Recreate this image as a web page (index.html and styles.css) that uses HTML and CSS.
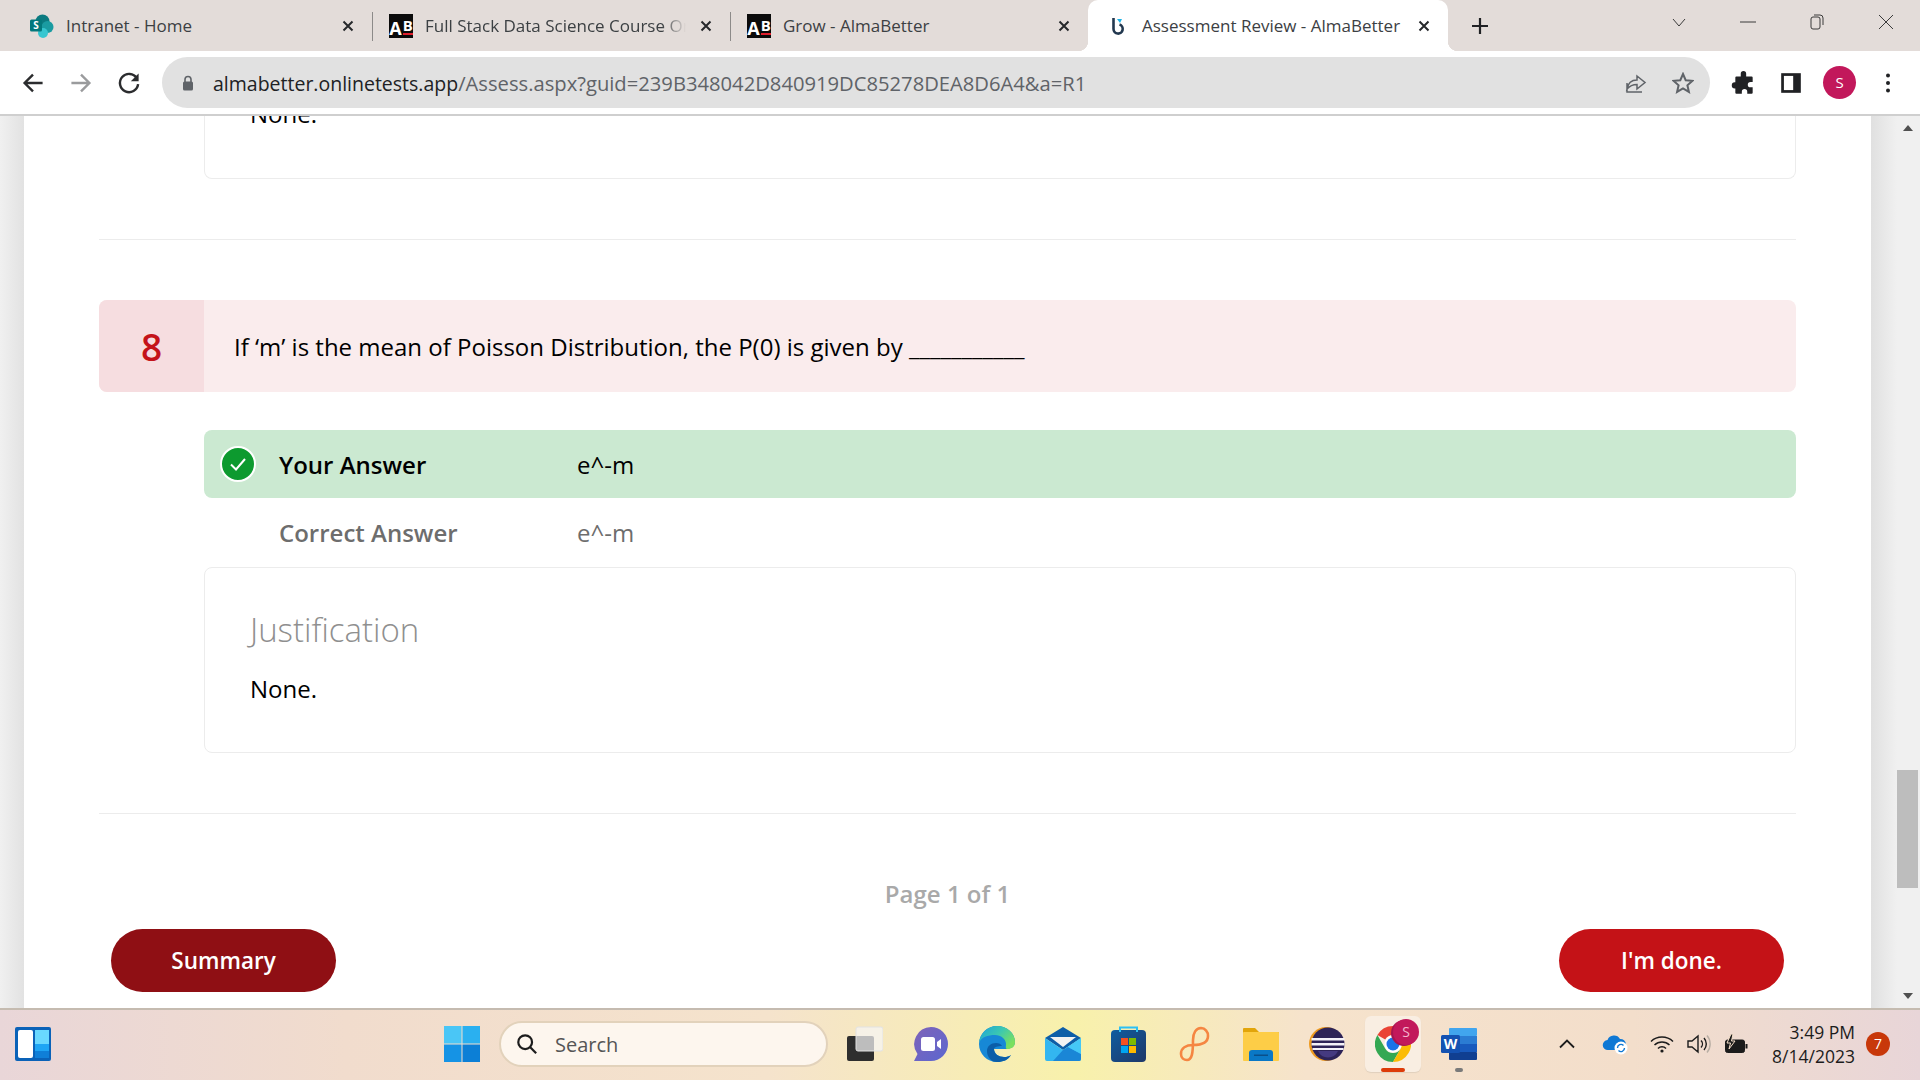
FILE: index.html
```html
<!DOCTYPE html>
<html lang="en">
<head>
  <meta charset="UTF-8" />
  <title>Assessment Review - AlmaBetter</title>
  <link rel="stylesheet" href="styles.css">
</head>
<body>

  <header class="tabstrip">
    <div class="tab tab-first">
      <svg class="favicon" viewBox="0 0 24 24"><circle cx="12.500" cy="7.500" r="7" fill="#0b7a80"/><circle cx="17.500" cy="13" r="6" fill="#1a9ba1"/><circle cx="13" cy="19" r="5" fill="#37c6d0"/><rect x="0" y="5.500" width="12" height="12" rx="1.500" fill="#03787c"/><text x="6" y="15" class="favicon-s">S</text></svg>
      <span class="tab-title">Intranet - Home</span>
      <svg class="tab-close" viewBox="0 0 12 12"><path d="M1.500 1.500l9 9M10.500 1.500l-9 9"/></svg>
    </div>
    <div class="tab tab-sep">
      <span class="ab-logo">A<span class="ab-b">B</span></span>
      <span class="tab-title tab-fade">Full Stack Data Science Course Online</span>
      <svg class="tab-close" viewBox="0 0 12 12"><path d="M1.500 1.500l9 9M10.500 1.500l-9 9"/></svg>
    </div>
    <div class="tab tab-sep">
      <span class="ab-logo">A<span class="ab-b">B</span></span>
      <span class="tab-title">Grow - AlmaBetter</span>
      <svg class="tab-close" viewBox="0 0 12 12"><path d="M1.500 1.500l9 9M10.500 1.500l-9 9"/></svg>
    </div>
    <div class="tab tab-active">
      <svg class="favicon-b" viewBox="0 0 16 20"><path d="M3.500 2v11a4.600 4.600 0 1 0 6-4.400" fill="none" stroke="#22384f" stroke-width="2.600"/><path d="M7 3h5l-2 4z" fill="#1fb2e6"/></svg>
      <span class="tab-title">Assessment Review - AlmaBetter</span>
      <svg class="tab-close" viewBox="0 0 12 12"><path d="M1.500 1.500l9 9M10.500 1.500l-9 9"/></svg>
    </div>
    <svg class="new-tab" viewBox="0 0 18 18"><path d="M9 1v16M1 9h16"/></svg>
    <div class="window-controls">
      <svg viewBox="0 0 16 16"><path d="M2 5l6 7 6-7"/></svg>
      <svg viewBox="0 0 16 16"><path d="M0 8h16"/></svg>
      <svg viewBox="0 0 16 16"><rect x="2" y="3" width="9" height="12" rx="2"/><path d="M5 1h6a3 3 0 0 1 3 3v7"/></svg>
      <svg viewBox="0 0 16 16"><path d="M1 1l14 14M15 1L1 15"/></svg>
    </div>
  </header>

  <nav class="toolbar">
    <svg class="nav-icon" viewBox="0 0 20 20"><path d="M18 10H3M10 3l-7 7 7 7"/></svg>
    <svg class="nav-icon nav-off" viewBox="0 0 20 20"><path d="M2 10h15M10 3l7 7-7 7"/></svg>
    <svg class="nav-icon" viewBox="0 0 20 20"><path d="M16.500 6A7.600 7.600 0 1 0 17.600 11"/><path class="fill" d="M18 2v6.500h-6.500z"/></svg>
    <div class="omnibox">
      <svg class="lock" viewBox="0 0 12 16"><path d="M3 7V4.500a3 3 0 0 1 6 0V7" fill="none" stroke="#5f6368" stroke-width="1.600"/><rect x="1" y="6.500" width="10" height="9" rx="1.500" fill="#5f6368"/></svg>
      <span class="url"><span class="url-host">almabetter.onlinetests.app</span>/Assess.aspx?guid=239B348042D840919DC85278DEA8D6A4&amp;a=R1</span>
      <svg class="omni-icon share" viewBox="0 0 22 22"><path d="M2 11v9h15M2 17c1-6 5-9 10-9V4l8 6.500-8 6.500v-4.500c-4 0-7 1-10 4.500z"/></svg>
      <svg class="omni-icon star" viewBox="0 0 22 22"><path d="M11 2l2.700 6.200 6.800.6-5.100 4.500 1.500 6.600L11 16.400l-5.900 3.500 1.500-6.600L1.500 8.800l6.800-.6z"/></svg>
    </div>
    <svg class="tool puzzle" viewBox="0 0 24 24"><path d="M9 3.500a2.500 2.500 0 0 1 5 0V6h5a1 1 0 0 1 1 1v4h-2a2.500 2.500 0 0 0 0 5h2v5a1 1 0 0 1-1 1h-4v-2a2.500 2.500 0 0 0-5 0v2H5a1 1 0 0 1-1-1v-4h-.5a2.800 2.800 0 0 1 0-5.600H4V7a1 1 0 0 1 1-1h4z"/></svg>
    <svg class="tool panel" viewBox="0 0 22 22"><rect x="2" y="2" width="18" height="18" fill="#202124"/><rect x="4.500" y="4.500" width="8.500" height="13" fill="#fff"/></svg>
    <span class="avatar">S</span>
    <svg class="tool dots" viewBox="0 0 6 22"><circle cx="3" cy="3.500" r="2"/><circle cx="3" cy="11" r="2"/><circle cx="3" cy="18.500" r="2"/></svg>
  </nav>

  <div class="viewport">
    <div class="gutter-left"></div>

    <main class="page">
      <section class="card card-clipped">
        <p class="card-text">None.</p>
      </section>
      <hr class="divider" />

      <section class="question">
        <div class="question-num">8</div>
        <div class="question-text">If ‘m’ is the mean of Poisson Distribution, the P(0) is given by ___________</div>
      </section>

      <div class="answer answer-right">
        <svg class="check" viewBox="0 0 36 36"><circle cx="18" cy="18" r="17" fill="#0d9a2f" stroke="#fff" stroke-width="2"/><path d="M11 18.500l5 5 9-10.500" fill="none" stroke="#fff" stroke-width="2"/></svg>
        <span class="answer-label">Your Answer</span>
        <span class="answer-value">e^-m</span>
      </div>
      <div class="answer answer-key">
        <span class="answer-label">Correct Answer</span>
        <span class="answer-value">e^-m</span>
      </div>

      <section class="card">
        <h2 class="card-title">Justification</h2>
        <p class="card-text">None.</p>
      </section>
      <hr class="divider" />

      <div class="pager">Page 1 of 1</div>
      <div class="actions">
        <button class="btn btn-summary">Summary</button>
        <button class="btn btn-done">I'm done.</button>
      </div>
    </main>

    <aside class="gutter-right">
      <div class="scrollbar">
        <span class="arrow-up"></span>
        <span class="thumb"></span>
        <span class="arrow-down"></span>
      </div>
    </aside>
  </div>

  <footer class="taskbar">
    <svg class="task-icon widgets" viewBox="0 0 36 34"><rect width="36" height="34" rx="2" fill="#0a62b8"/><rect x="3" y="3" width="15" height="28" rx="2" fill="#fff"/><rect x="20" y="3" width="14" height="14" fill="#69d8ff"/><rect x="20" y="17" width="14" height="7" fill="#1ea5f5"/><rect x="20" y="24" width="14" height="7" fill="#0f7fd8"/></svg>

    <svg class="task-icon start" viewBox="0 0 36 36"><rect width="17.500" height="17.500" fill="#4ac6f6"/><rect x="18.500" width="17.500" height="17.500" fill="#2ab0f0"/><rect y="18.500" width="17.500" height="17.500" fill="#1593e5"/><rect x="18.500" y="18.500" width="17.500" height="17.500" fill="#0c7fd6"/></svg>

    <div class="search">
      <svg class="search-icon" viewBox="0 0 24 24"><circle cx="10" cy="10" r="7.500"/><path d="M15.500 15.500L22 22"/></svg>
      <span>Search</span>
    </div>

    <div class="apps">
      <div class="app">
        <svg class="task-icon" viewBox="0 0 36 34"><rect x="0" y="9" width="27" height="25" rx="2" fill="#2e2e2e"/><rect x="9" y="0" width="27" height="24" rx="2" fill="#f5f5f5" fill-opacity=".72" stroke="#e2e2e2"/></svg>
      </div>
      <div class="app">
        <svg class="task-icon" viewBox="0 0 36 36"><defs><linearGradient id="teamsFill" x1="0" y1="0" x2="1" y2="1"><stop offset="0" stop-color="#7f63b8"/><stop offset="1" stop-color="#5b67d0"/></linearGradient></defs><path d="M18 1a17 17 0 0 1 0 34H1l3.500-7A17 17 0 0 1 18 1z" fill="url(#teamsFill)"/><rect x="8" y="11" width="14" height="14" rx="2.500" fill="#fff"/><path d="M24 16l4-3v10l-4-3z" fill="#fff"/></svg>
      </div>
      <div class="app">
        <svg class="task-icon" viewBox="0 0 36 36"><defs><linearGradient id="edgeTop" x1="0" y1="0" x2="1" y2=".6"><stop offset="0" stop-color="#1aa3dc"/><stop offset=".55" stop-color="#3cc8b0"/><stop offset="1" stop-color="#7be05e"/></linearGradient></defs><path d="M18 0c10 0 18 7 18 16 0 5-5 7-9 7H15c0 5 5 8 10 8 3 0 5-.5 7-2-3 5-8 7-14 7C8 36 0 28 0 18S8 0 18 0z" fill="#1788d6"/><path d="M0 17C1 7 9 0 18 0c10 0 18 7 18 16 0 5-4 7-7 7-3 0-2-2-2-5 0-5-5-9-11-9C9 9 2 11 0 17z" fill="url(#edgeTop)"/><path d="M15 23c0 5 5 8 10 8 3 0 5-.5 7-2-3 5-8 7-14 7-6 0-10-5-10-11 0-5 4-8 9-8 3 0 5 1 6 3-4 0-8 1-8 3z" fill="#0b5ea8"/></svg>
      </div>
      <div class="app">
        <svg class="task-icon" viewBox="0 0 36 34"><path d="M0 11L18 0l18 11-18 12z" fill="#0d5ea8"/><path d="M5 10h26l-13 10z" fill="#f2f2f2"/><path d="M0 11l18 12 18-12v21a2 2 0 0 1-2 2H2a2 2 0 0 1-2-2z" fill="#33b6f0"/><path d="M36 27v5a2 2 0 0 1-2 2H8l10-11 5-3z" fill="#1a86d6"/><path d="M36 11v16L23 20z" fill="#45c8f6"/></svg>
      </div>
      <div class="app">
        <svg class="task-icon" viewBox="0 0 36 36"><defs><linearGradient id="storeFill" x1="0" y1="0" x2="1" y2="1"><stop offset="0" stop-color="#0f5da0"/><stop offset="1" stop-color="#1f3868"/></linearGradient></defs><rect y="4" width="35" height="32" rx="4" fill="url(#storeFill)"/><path d="M9 6V1.500h17V6" fill="none" stroke="#2cc0f5" stroke-width="2"/><rect x="10" y="12" width="7" height="7" fill="#f25022"/><rect x="18" y="12" width="7" height="7" fill="#7fba00"/><rect x="10" y="20" width="7" height="7" fill="#00a4ef"/><rect x="18" y="20" width="7" height="7" fill="#ffb900"/></svg>
      </div>
      <div class="app">
        <svg class="task-icon perf" viewBox="0 0 36 36"><path d="M16 14c0-7 3-12 8-12a7.500 7.500 0 0 1 7 8c0 6-6 9-15 9-7 0-12 3-12 9 0 4 3 6 6 6 5 0 6-7 6-20"/></svg>
      </div>
      <div class="app">
        <svg class="task-icon" viewBox="0 0 36 34"><path d="M0 2a1 1 0 0 1 1-1h11l4 4h19a1 1 0 0 1 1 1v5H0z" fill="#e2a50a"/><rect y="5" width="36" height="29" rx="1" fill="#fdcd47"/><path d="M6 34v-8a3 3 0 0 1 3-3h18a3 3 0 0 1 3 3v8z" fill="#0a78c6"/><rect x="11" y="27.500" width="14" height="1.500" fill="#0a4f8a"/></svg>
      </div>
      <div class="app">
        <svg class="task-icon" viewBox="0 0 36 36"><circle cx="17" cy="18" r="17" fill="#ee9a1f"/><circle cx="19" cy="18" r="16.500" fill="#2d2357"/><path d="M9 25h20a11 11 0 0 1-20 0z" fill="#453a80"/><rect x="2.500" y="12" width="33" height="2.500" fill="#f3f1f8"/><rect x="2.500" y="17" width="33" height="2.500" fill="#f3f1f8"/><rect x="3.500" y="22" width="31" height="2" fill="#f3f1f8"/></svg>
      </div>
      <div class="app app-active">
        <svg class="task-icon" viewBox="0 0 36 36"><path d="M18 0a18 18 0 0 1 15.600 9H18a9 9 0 0 0-7.800 4.500L2.400 9A18 18 0 0 1 18 0z" fill="#ea4335"/><path d="M2.400 9l7.800 13.500a9 9 0 0 0 15.600 0L18 36A18 18 0 0 1 2.400 9z" fill="#34a853"/><path d="M33.600 9H18a9 9 0 0 1 7.800 13.500L18 36A18 18 0 0 0 33.600 9z" fill="#fbbc05"/><circle cx="18" cy="18" r="8.500" fill="#fff"/><circle cx="18" cy="18" r="6.500" fill="#1a73e8"/></svg>
        <span class="chrome-badge">S</span>
        <span class="app-bar"></span>
      </div>
      <div class="app app-open">
        <svg class="task-icon" viewBox="0 0 36 32"><rect x="8" y="0" width="28" height="8" rx="1" fill="#41a5ee"/><rect x="8" y="8" width="28" height="8" fill="#2b7cd3"/><rect x="8" y="16" width="28" height="8" fill="#185abd"/><rect x="8" y="24" width="28" height="8" rx="1" fill="#103f91"/><rect x="0" y="7" width="19" height="18" rx="1.500" fill="#1452b2"/><text x="9.500" y="21" class="word-w">W</text></svg>
        <span class="app-dot"></span>
      </div>
    </div>

    <div class="tray">
      <svg class="tray-chevron" viewBox="0 0 16 10"><path d="M1 8.500l7-7 7 7"/></svg>
      <svg class="tray-cloud" viewBox="0 0 26 22"><path d="M6 17a5 5 0 0 1-.5-10A7 7 0 0 1 18 6a5.500 5.500 0 0 1 1 11z" fill="#0f78d4"/><circle cx="19" cy="15" r="6.500" fill="#fff"/><path d="M15.500 15a3.500 3.500 0 0 1 6-2.500M22.500 15a3.500 3.500 0 0 1-6 2.500" fill="none" stroke="#0f78d4" stroke-width="1.400"/></svg>
      <svg class="tray-wifi" viewBox="0 0 24 18"><path d="M1 6.500a16 16 0 0 1 22 0M4.500 10a11 11 0 0 1 15 0M8 13.500a5.500 5.500 0 0 1 8 0"/><circle class="fill" cx="12" cy="16" r="1.600"/></svg>
      <svg class="tray-speaker" viewBox="0 0 24 20"><path d="M1 7v6h4l6 5V2L5 7zM14 6.500a5 5 0 0 1 0 7M17 4a9 9 0 0 1 0 12"/><path class="soft" d="M20 1.500a13 13 0 0 1 0 17"/></svg>
      <svg class="tray-battery" viewBox="0 0 24 20"><rect x="1.500" y="6" width="19" height="12.500" rx="2" fill="#1b1b1b" stroke="#1b1b1b"/><rect x="21.500" y="10" width="2" height="4.500" fill="#1b1b1b"/><path d="M7 0L3 9h3.500L5 15l6-8H7.500l1.500-7z" fill="#1b1b1b" stroke="#f5dfca" stroke-width="1"/></svg>
      <div class="clock">
        <span>3:49 PM</span>
        <span>8/14/2023</span>
      </div>
      <span class="notify">7</span>
    </div>
  </footer>

</body>
</html>
```

FILE: styles.css
```css
* {
  box-sizing: border-box;
}

body {
  margin: 0;
  width: 1920px;
  height: 1080px;
  overflow: hidden;
  display: flex;
  flex-direction: column;
  font-family: "Open Sans", "Noto Sans", sans-serif;
  background: #fff;
  color: #000;
}

/* Chrome tab strip */
.tabstrip {
  height: 51px;
  flex: none;
  display: flex;
  background: #e3dcd9;
  font-size: 17px;
  color: #3c4043;
}

.tab {
  position: relative;
  width: 358px;
  display: flex;
  align-items: center;
  padding: 0 17px;
}

.tab-first {
  width: 372px;
  padding-left: 30px;
}

.tab-sep::before {
  content: "";
  position: absolute;
  left: 0;
  top: 12px;
  width: 1px;
  height: 29px;
  background: #8c8a89;
}

.tab-active {
  width: 360px;
  padding-left: 21px;
  background: #fff;
  border-radius: 10px 10px 0 0;
}

.tab-active::before,
.tab-active::after {
  content: "";
  position: absolute;
  bottom: 0;
  width: 10px;
  height: 10px;
}

.tab-active::before {
  left: -10px;
  background: radial-gradient(circle at 0 0, transparent 10px, #fff 10.500px);
}

.tab-active::after {
  right: -10px;
  background: radial-gradient(circle at 100% 0, transparent 10px, #fff 10.500px);
}

.favicon {
  width: 24px;
  height: 24px;
  flex: none;
  margin-right: 12px;
}

.favicon-s {
  font-size: 10px;
  font-weight: 700;
  fill: #fff;
  text-anchor: middle;
}

.favicon-b {
  width: 16px;
  height: 20px;
  flex: none;
  margin: 0 16px 0 1px;
}

.ab-logo {
  width: 24px;
  height: 24px;
  flex: none;
  margin-right: 12px;
  display: flex;
  align-items: flex-end;
  justify-content: center;
  padding-bottom: 3px;
  background: #0b0b0b;
  color: #fff;
  font-size: 18px;
  font-weight: 700;
  line-height: 14px;
}

.ab-b {
  margin-left: 1px;
  padding-bottom: 1px;
  border-bottom: 2.500px solid #e01f2d;
  font-size: 15px;
  line-height: 13px;
}

.tab-title {
  flex: 1;
  white-space: nowrap;
  overflow: hidden;
}

.tab-fade {
  -webkit-mask-image: linear-gradient(to right, #000 88%, transparent 97%);
  mask-image: linear-gradient(to right, #000 88%, transparent 97%);
}

.tab-close {
  width: 12px;
  height: 12px;
  flex: none;
  margin: 0 1px 0 6px;
  fill: none;
  stroke: #26282b;
  stroke-width: 2;
}

.new-tab {
  width: 18px;
  height: 18px;
  margin: 17px 0 0 23px;
  fill: none;
  stroke: #202124;
  stroke-width: 2.200;
}

.window-controls {
  margin-left: auto;
  display: flex;
  gap: 53px;
  padding: 14px 26px 0 0;
}

.window-controls svg {
  width: 16px;
  height: 16px;
  fill: none;
  stroke: #3a3a3a;
  stroke-width: 1;
}

/* Toolbar */
.toolbar {
  height: 65px;
  flex: none;
  display: flex;
  align-items: center;
  background: #fff;
  border-bottom: 2px solid #cfcfcf;
}

.nav-icon {
  width: 24px;
  height: 24px;
  margin-left: 21px;
  fill: none;
  stroke: #2b2c2e;
  stroke-width: 2;
}

.nav-icon + .nav-icon {
  margin-left: 24px;
}

.nav-icon .fill {
  fill: #2b2c2e;
  stroke: none;
}

.nav-off {
  stroke: #9a9b9d;
}

.omnibox {
  width: 1548px;
  height: 51px;
  margin-left: 21px;
  display: flex;
  align-items: center;
  padding: 0 16px 0 20px;
  border-radius: 26px;
  background: #e1e1e1;
  font-size: 20.200px;
  color: #5f6368;
}

.lock {
  width: 12px;
  height: 16px;
  margin-right: 19px;
}

.url {
  flex: 1;
  white-space: nowrap;
}

.url-host {
  font-size: 19.500px;
  color: #202124;
}

.omni-icon {
  width: 22px;
  height: 22px;
  fill: none;
  stroke: #5f6368;
  stroke-width: 1.500;
}

.star {
  margin-left: 25px;
  stroke-width: 2;
}

.tool {
  flex: none;
  fill: #202124;
}

.puzzle {
  width: 26px;
  height: 26px;
  margin-left: 21px;
}

.panel {
  width: 24px;
  height: 24px;
  margin-left: 22px;
}

.avatar {
  width: 33px;
  height: 33px;
  margin-left: 20px;
  border-radius: 50%;
  background: #c2185b;
  color: #fff;
  font-size: 15px;
  line-height: 33px;
  text-align: center;
}

.dots {
  width: 6px;
  height: 22px;
  margin-left: 29px;
}

/* Page area */
.viewport {
  flex: 1;
  min-height: 0;
  display: flex;
}

.gutter-left {
  width: 24px;
  background: linear-gradient(to right, #f0f0f0, #e2e2e2);
}

.page {
  width: 1847px;
  padding: 0 75px;
  overflow: hidden;
  background: #fff;
}

.card {
  height: 186px;
  margin-left: 105px;
  padding: 39px 45px 0;
  border: 1px solid #ececec;
  border-radius: 8px;
}

.card-clipped {
  display: flow-root;
  height: 63px;
  padding-top: 0;
  border-top: none;
  border-radius: 0 0 8px 8px;
}

.card-title {
  margin: 0;
  font-size: 33px;
  font-weight: 300;
  line-height: 46px;
  color: #8f8f8f;
}

.card-text {
  margin: 20px 0 0;
  font-size: 24px;
  line-height: 32px;
}

.card-clipped .card-text {
  margin-top: -18px;
}

.divider {
  height: 1px;
  margin: 60px 0;
  border: none;
  background: #ececec;
}

.question {
  height: 92px;
  display: flex;
  align-items: center;
  border-radius: 8px;
  overflow: hidden;
  background: #faeced;
}

.question-num {
  width: 105px;
  height: 100%;
  display: flex;
  align-items: center;
  justify-content: center;
  background: #f6dde0;
  color: #c4131a;
  font-size: 37px;
  font-weight: 600;
}

.question-text {
  padding-left: 30px;
  font-size: 24px;
}

.answer {
  height: 68px;
  margin-left: 105px;
  display: flex;
  align-items: center;
  padding-left: 75px;
  font-size: 24px;
}

.answer-right {
  position: relative;
  margin-top: 38px;
  border-radius: 8px;
  background: #cbe9d1;
}

.check {
  position: absolute;
  left: 16px;
  top: 16px;
  width: 36px;
  height: 36px;
}

.answer-label {
  width: 298px;
  font-weight: 600;
}

.answer-key {
  height: 69px;
  color: #6d6d6d;
}

.pager {
  margin-top: 60px;
  text-align: center;
  font-size: 24px;
  font-weight: 600;
  line-height: 40px;
  color: #a9a9a9;
}

.actions {
  display: flex;
  justify-content: space-between;
  padding: 0 12px;
  margin-top: 15px;
}

.btn {
  width: 225px;
  height: 63px;
  border: none;
  border-radius: 32px;
  color: #fff;
  font-family: inherit;
  font-size: 22.500px;
  font-weight: 600;
}

.btn-summary {
  background: #8f0f14;
}

.btn-done {
  background: #c41217;
}

.gutter-right {
  width: 49px;
  padding-left: 26px;
  background: linear-gradient(to right, #e0e0e0, #f0f0f0 26px);
}

.scrollbar {
  width: 21px;
  height: 100%;
  display: flex;
  flex-direction: column;
  align-items: center;
  padding: 9px 0;
}

.arrow-up,
.arrow-down {
  width: 0;
  height: 0;
  border-left: 5.500px solid transparent;
  border-right: 5.500px solid transparent;
}

.arrow-up {
  border-bottom: 6px solid #505050;
}

.arrow-down {
  border-top: 6px solid #505050;
}

.thumb {
  width: 21px;
  height: 118px;
  margin-top: auto;
  margin-bottom: 105px;
  background: #bdbdbd;
}

/* Windows taskbar */
.taskbar {
  height: 72px;
  flex: none;
  display: flex;
  align-items: center;
  padding-bottom: 2px;
  border-top: 2px solid #c5bbb0;
  background: linear-gradient(to right, #e9d6d8 0%, #f1dccd 18%, #f5e3cc 40%, #f8f1ab 56%, #f6e3cc 68%, #f3decb 85%, #e8d5d8 100%);
}

.task-icon {
  width: 36px;
  height: 36px;
  flex: none;
  display: block;
}

.widgets {
  margin-left: 15px;
  height: 34px;
}

.start {
  margin-left: 393px;
}

.search {
  width: 329px;
  height: 46px;
  margin-left: 19px;
  display: flex;
  align-items: center;
  padding-left: 15px;
  border: 2px solid #e2d2bb;
  border-radius: 23px;
  background: #fdf6ee;
  font-size: 20px;
  color: #555;
}

.search-icon {
  width: 22px;
  height: 22px;
  margin-right: 17px;
  fill: none;
  stroke: #1c1c1c;
  stroke-width: 2.400;
}

.apps {
  margin-left: 4px;
  display: flex;
}

.app {
  position: relative;
  width: 66px;
  height: 56px;
  display: flex;
  align-items: center;
  justify-content: center;
}

.app-active {
  width: 56px;
  margin: 0 5px;
  border-radius: 6px;
  background: #f9eee2;
  box-shadow: 0 1px 1px #e0d0bd;
}

.perf {
  fill: none;
  stroke: #f58642;
  stroke-width: 2.600;
}

.chrome-badge {
  position: absolute;
  right: 2px;
  top: 3px;
  width: 26px;
  height: 26px;
  border-radius: 50%;
  background: #c2185b;
  box-shadow: -2px 1px 0 #a5154f;
  color: #f4b6cd;
  font-size: 14px;
  line-height: 26px;
  text-align: center;
}

.app-bar {
  position: absolute;
  left: 16px;
  bottom: 0;
  width: 24px;
  height: 4px;
  border-radius: 2px;
  background: #dd3c0a;
}

.app-dot {
  position: absolute;
  left: 29px;
  bottom: 0;
  width: 8px;
  height: 4px;
  border-radius: 2px;
  background: #7a7a7a;
}

.word-w {
  font-size: 14px;
  font-weight: 700;
  fill: #fff;
  text-anchor: middle;
}

.tray {
  margin-left: auto;
  display: flex;
  align-items: center;
  padding-right: 30px;
}

.tray-chevron {
  width: 16px;
  height: 10px;
  fill: none;
  stroke: #1c1c1c;
  stroke-width: 1.800;
}

.tray-cloud {
  width: 26px;
  height: 22px;
  margin-left: 27px;
}

.tray-wifi {
  width: 24px;
  height: 18px;
  margin-left: 22px;
  fill: none;
  stroke: #1c1c1c;
  stroke-width: 1.500;
}

.tray-wifi .fill {
  fill: #1c1c1c;
  stroke: none;
}

.tray-speaker {
  width: 24px;
  height: 20px;
  margin-left: 13px;
  fill: none;
  stroke: #1c1c1c;
  stroke-width: 1.400;
}

.tray-speaker .soft {
  stroke: #b8aea4;
}

.tray-battery {
  width: 24px;
  height: 20px;
  margin-left: 13px;
}

.clock {
  margin-left: 24px;
  display: flex;
  flex-direction: column;
  align-items: flex-end;
  font-size: 17.500px;
  line-height: 24px;
  color: #1c1c1c;
}

.notify {
  width: 24px;
  height: 24px;
  margin-left: 11px;
  border-radius: 50%;
  background: #c8380a;
  color: #fff;
  font-size: 14px;
  line-height: 24px;
  text-align: center;
}
```
